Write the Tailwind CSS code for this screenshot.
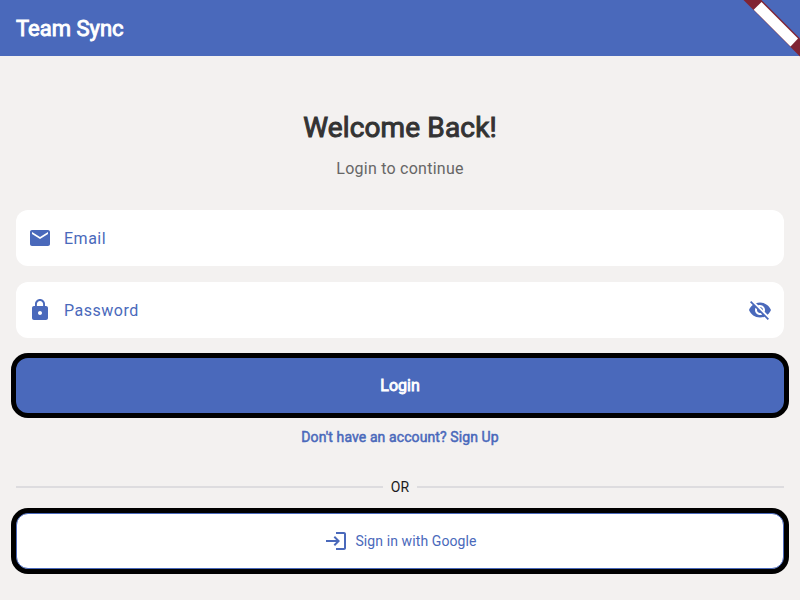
<!DOCTYPE html>
<html lang="en">
<head>
<meta charset="utf-8">
<title>Team Sync</title>
<script src="https://cdn.jsdelivr.net/npm/@tailwindcss/browser@4"></script>
</head>
<body class="relative h-[600px] w-[800px] overflow-hidden bg-[#f3f1f0] font-['Roboto',sans-serif] text-[#4a69bb]">
  <header class="flex h-14 items-center bg-[#4a69bb] px-4">
    <h1 class="pt-px text-[22px] leading-7 text-white [-webkit-text-stroke:0.9px_currentColor]">Team Sync</h1>
  </header>
  <svg class="absolute right-0 top-0" width="60" height="60" viewBox="740 0 60 60">
    <path d="M743.500 0H761.500L800 38.500V56.500Z" fill="#802434"/>
    <path d="M761.500 2L798 38.500L790.500 46.500L753.700 9.700Z" fill="#fff"/>
  </svg>
  <main class="flex flex-col px-4 pt-[54px]">
    <h2 class="text-center text-[28px] leading-9 tracking-[0.15px] text-[#333] [-webkit-text-stroke:1px_currentColor]">Welcome Back!</h2>
    <p class="mt-[11px] text-center text-base leading-6 tracking-[0.25px] text-[#666]">Login to continue</p>
    <label class="mt-[29px] flex h-14 items-center rounded-xl bg-white px-3">
      <svg width="24" height="24" viewBox="0 0 24 24" fill="currentColor"><path d="M20 4H4c-1.100 0-1.990.9-1.990 2L2 18c0 1.100.9 2 2 2h16c1.100 0 2-.9 2-2V6c0-1.100-.9-2-2-2zm0 4l-8 5-8-5V6l8 5 8-5v2z"/></svg>
      <span class="ml-3 pt-0.5 text-base leading-6 tracking-[0.5px]">Email</span>
    </label>
    <label class="mt-4 flex h-14 items-center rounded-xl bg-white px-3">
      <svg width="24" height="24" viewBox="0 0 24 24" fill="currentColor"><path d="M18 8h-1V6c0-2.760-2.240-5-5-5S7 3.240 7 6v2H6c-1.100 0-2 .9-2 2v10c0 1.100.9 2 2 2h12c1.100 0 2-.9 2-2V10c0-1.100-.9-2-2-2zm-6 9c-1.100 0-2-.9-2-2s.9-2 2-2 2 .9 2 2-.9 2-2 2zm3.100-9H8.900V6c0-1.710 1.390-3.100 3.100-3.100 1.710 0 3.100 1.390 3.100 3.100v2z"/></svg>
      <span class="ml-3 pt-0.5 text-base leading-6 tracking-[0.5px]">Password</span>
      <svg class="ml-auto" width="24" height="24" viewBox="0 0 24 24" fill="currentColor"><path d="M12 7c2.760 0 5 2.240 5 5 0 .65-.13 1.260-.36 1.830l2.920 2.920c1.510-1.260 2.700-2.890 3.430-4.750-1.730-4.390-6-7.500-11-7.500-1.400 0-2.740.25-3.980.7l2.160 2.160C10.740 7.130 11.350 7 12 7zM2 4.270l2.280 2.280.46.46C3.080 8.300 1.780 10.020 1 12c1.730 4.390 6 7.500 11 7.500 1.550 0 3.030-.3 4.380-.84l.42.42L19.730 22 21 20.730 3.270 3 2 4.270zM7.530 9.800l1.550 1.550c-.05.21-.08.43-.08.65 0 1.660 1.340 3 3 3 .22 0 .44-.03.65-.08l1.550 1.550c-.67.33-1.410.53-2.200.53-2.760 0-5-2.240-5-5 0-.79.2-1.530.53-2.200zm4.310-.78l3.150 3.150.02-.16c0-1.660-1.340-3-3-3l-.17.01z"/></svg>
    </label>
    <button class="-mx-[5px] mt-[15px] h-[65px] rounded-[17px] border-[5px] border-black bg-[#4a69bb] text-base leading-6 text-white [-webkit-text-stroke:0.8px_currentColor]">Login</button>
    <a class="mt-[9px] text-center text-sm leading-5 tracking-[0.1px] [-webkit-text-stroke:0.5px_currentColor]">Don't have an account? Sign Up</a>
    <div class="mt-[30px] flex h-5 items-center">
      <div class="h-0.5 flex-1 bg-[#dddcdf]"></div>
      <span class="px-2 pb-px text-sm leading-5 tracking-[0.25px] text-[#1b1b21]">OR</span>
      <div class="h-0.5 flex-1 bg-[#dddcdf]"></div>
    </div>
    <div class="-mx-[5px] mt-[11px] h-[66px] rounded-[17px] bg-black p-[5px]">
      <button class="flex h-14 w-full items-center justify-center gap-2 rounded-xl border border-[#4a69bb] bg-white text-sm leading-5">
        <svg class="-mr-px ml-px" width="24" height="24" viewBox="0 0 24 24" fill="currentColor"><path d="M11 7L9.600 8.400l2.600 2.600H2v2h10.200l-2.600 2.600L11 17l5-5-5-5zm9 12h-8v2h8c1.100 0 2-.9 2-2V5c0-1.100-.9-2-2-2h-8v2h8v14z"/></svg>
        <span class="tracking-[0.1px]">Sign in with Google</span>
      </button>
    </div>
  </main>
</body>
</html>
